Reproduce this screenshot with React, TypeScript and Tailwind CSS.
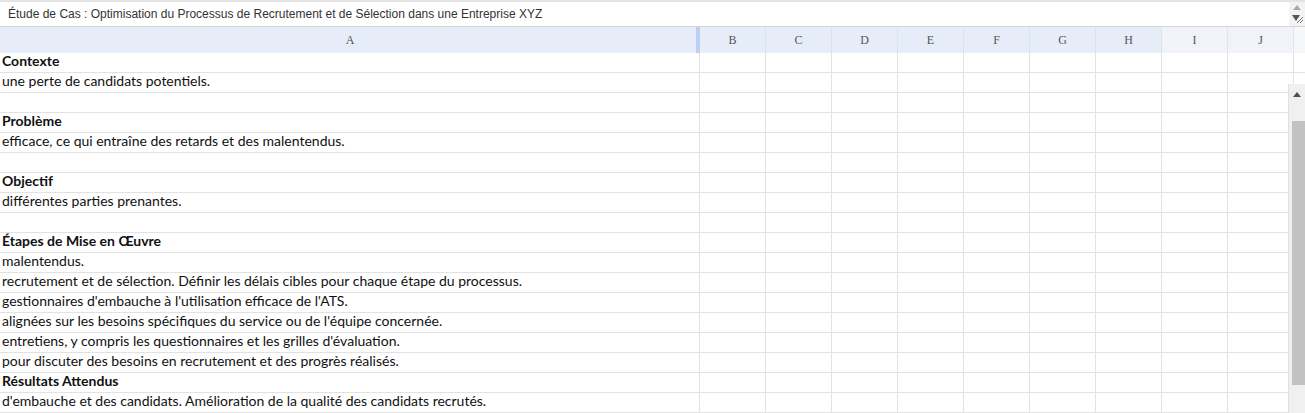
const cols = ["B", "C", "D", "E", "F", "G", "H", "I", "J"];

const rows: { text: string; bold?: boolean }[] = [
  { text: "Contexte", bold: true },
  { text: "une perte de candidats potentiels." },
  { text: "" },
  { text: "Problème", bold: true },
  { text: "efficace, ce qui entraîne des retards et des malentendus." },
  { text: "" },
  { text: "Objectif", bold: true },
  { text: "différentes parties prenantes." },
  { text: "" },
  { text: "Étapes de Mise en Œuvre", bold: true },
  { text: "malentendus." },
  { text: "recrutement et de sélection. Définir les délais cibles pour chaque étape du processus." },
  { text: "gestionnaires d'embauche à l'utilisation efficace de l'ATS." },
  { text: "alignées sur les besoins spécifiques du service ou de l'équipe concernée." },
  { text: "entretiens, y compris les questionnaires et les grilles d'évaluation." },
  { text: "pour discuter des besoins en recrutement et des progrès réalisés." },
  { text: "Résultats Attendus", bold: true },
  { text: "d'embauche et des candidats. Amélioration de la qualité des candidats recrutés." },
];

function FormulaBar() {
  return (
    <div className="flex h-[27px] border-t-2 border-b border-t-[#e4e4e4] border-b-[#d4d4d4] bg-white">
      <div className="flex-1 pl-[8px] pt-[5px] text-[12px] leading-[14px] text-[#333] font-['Liberation_Sans',Arial,sans-serif]">
        Étude de Cas : Optimisation du Processus de Recrutement et de Sélection dans une Entreprise XYZ
      </div>
      <div className="flex w-[16px] flex-col items-center justify-between bg-[#f3f3f3] py-[3px]">
        <svg width="8" height="5" viewBox="0 0 8 5">
          <path d="M0 5 L4 0 L8 5 Z" fill="#a8a8a8" />
        </svg>
        <svg width="12" height="8" viewBox="0 0 12 8">
          <path d="M1 0 L9 0 L5 6 Z" fill="#555" />
          <path d="M12 2 L6 8 M12 5 L9 8" stroke="#777" strokeWidth="1" />
        </svg>
      </div>
    </div>
  );
}

function HeaderRow() {
  return (
    <div className="flex h-[26px] font-['Liberation_Serif',serif] text-[12px] text-[#555]">
      <div className="relative flex w-[700px] items-center justify-center bg-[#e6edf9]">
        A
        <div className="absolute right-0 top-0 h-full w-[4px] bg-[#bcd0f5]" />
      </div>
      {cols.map((c, i) => (
        <div
          key={c}
          className={`flex w-[66px] items-center justify-center border-r ${
            i < 7 ? "bg-[#e6edf9] border-[#dbe3f1]" : "bg-[#f1f3f8] border-[#e2e5ec]"
          }`}
        >
          {c}
        </div>
      ))}
      <div className="flex-1 bg-[#f6f7fa]" />
    </div>
  );
}

function Row({ text, bold }: { text: string; bold?: boolean }) {
  return (
    <div className="flex h-[20px]">
      <div
        className={`w-[700px] border-r border-b border-[#e2e2e2] pl-[2px] text-[14px] leading-[16px] text-[#111] font-['Lato','Open_Sans',sans-serif] whitespace-nowrap ${
          bold ? "font-bold" : ""
        }`}
      >
        {text}
      </div>
      {cols.map((c) => (
        <div key={c} className="w-[66px] border-r border-b border-[#e2e2e2]" />
      ))}
      <div className="flex-1 border-b border-[#e2e2e2]" />
    </div>
  );
}

export default function App() {
  return (
    <div className="relative h-[413px] w-[1305px] overflow-hidden bg-white">
      <FormulaBar />
      <HeaderRow />
      {rows.map((r, i) => (
        <Row key={i} text={r.text} bold={r.bold} />
      ))}
      <div className="absolute right-0 top-[84px] flex h-[329px] w-[17px] flex-col items-center border-l border-[#e0e0e0] bg-[#f0f0f0]">
        <svg className="mt-[8px]" width="8" height="5" viewBox="0 0 8 5">
          <path d="M0 5 L4 0 L8 5 Z" fill="#505050" />
        </svg>
        <div className="ml-[2px] mt-[24px] h-[264px] w-[13px] bg-[#c2c2c2]" />
      </div>
    </div>
  );
}
